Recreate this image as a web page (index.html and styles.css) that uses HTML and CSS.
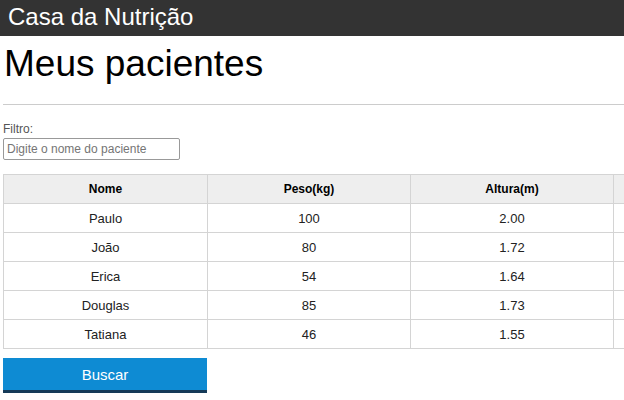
FILE: index.html
```html
<!DOCTYPE html>
<html lang="pt-BR">
<head>
<meta charset="utf-8">
<title>Casa da Nutrição</title>
<link rel="stylesheet" href="styles.css">
</head>
<body>
<header class="topbar">Casa da Nutrição</header>
<main class="container">
  <h1 class="title">Meus pacientes</h1>
  <hr class="divider">
  <div class="filter">
    <label class="filter-label" for="filtro">Filtro:</label>
    <input class="filter-input" id="filtro" type="text" placeholder="Digite o nome do paciente">
  </div>
  <table class="patients">
    <colgroup>
      <col class="col-first"><col class="col"><col class="col"><col class="col"><col class="col">
    </colgroup>
    <thead>
      <tr><th>Nome</th><th>Peso(kg)</th><th>Altura(m)</th><th></th><th></th></tr>
    </thead>
    <tbody>
      <tr><td>Paulo</td><td>100</td><td>2.00</td><td></td><td></td></tr>
      <tr><td>João</td><td>80</td><td>1.72</td><td></td><td></td></tr>
      <tr><td>Erica</td><td>54</td><td>1.64</td><td></td><td></td></tr>
      <tr><td>Douglas</td><td>85</td><td>1.73</td><td></td><td></td></tr>
      <tr><td>Tatiana</td><td>46</td><td>1.55</td><td></td><td></td></tr>
    </tbody>
  </table>
  <button class="search-btn" type="button">Buscar</button>
</main>
</body>
</html>
```

FILE: styles.css
```css
html { overflow: hidden; }
body {
  margin: 0;
  font-family: "Liberation Sans", Arial, sans-serif;
  color: #000;
  background: #fff;
}
.topbar {
  background: #333;
  color: #fff;
  font-size: 24px;
  height: 36px;
  line-height: 34px;
  padding: 0 8px;
  box-sizing: border-box;
}
.container {
  padding: 0 0 0 3px;
}
.title {
  font-size: 37px;
  font-weight: normal;
  margin: 7px 0 0 1px;
  line-height: 42px;
}
.divider {
  border: 0;
  border-top: 1px solid #ccc;
  margin: 19px 0 0 0;
}
.filter {
  margin-top: 17px;
  display: flex;
  flex-direction: column;
  align-items: flex-start;
}
.filter-label {
  font-size: 12px;
  color: #555;
  line-height: 14px;
}
.filter-input {
  margin-top: 2px;
  width: 177px;
  height: 22px;
  box-sizing: border-box;
  border: 1px solid #999;
  border-radius: 2px;
  font-family: "Liberation Sans", Arial, sans-serif;
  font-size: 12px;
  padding: 0 3px;
}
.filter-input::placeholder { color: #757575; }
.patients {
  margin-top: 14px;
  border-collapse: collapse;
  table-layout: fixed;
  width: 1017px;
}
.col-first { width: 204px; }
.col { width: 203px; }
.patients th, .patients td {
  border: 1px solid #d4d4d4;
  text-align: center;
  height: 28px;
  padding: 0;
}
.patients th {
  background: #eee;
  font-size: 12px;
  font-weight: bold;
}
.patients td {
  font-size: 13px;
  color: #222;
}
.search-btn {
  display: block;
  margin-top: 9px;
  width: 204px;
  height: 35px;
  background: #0e8bd3;
  color: #fff;
  border: 0;
  border-bottom: 3px solid #153a58;
  font-family: "Liberation Sans", Arial, sans-serif;
  font-size: 15px;
  padding: 0;
}
```
